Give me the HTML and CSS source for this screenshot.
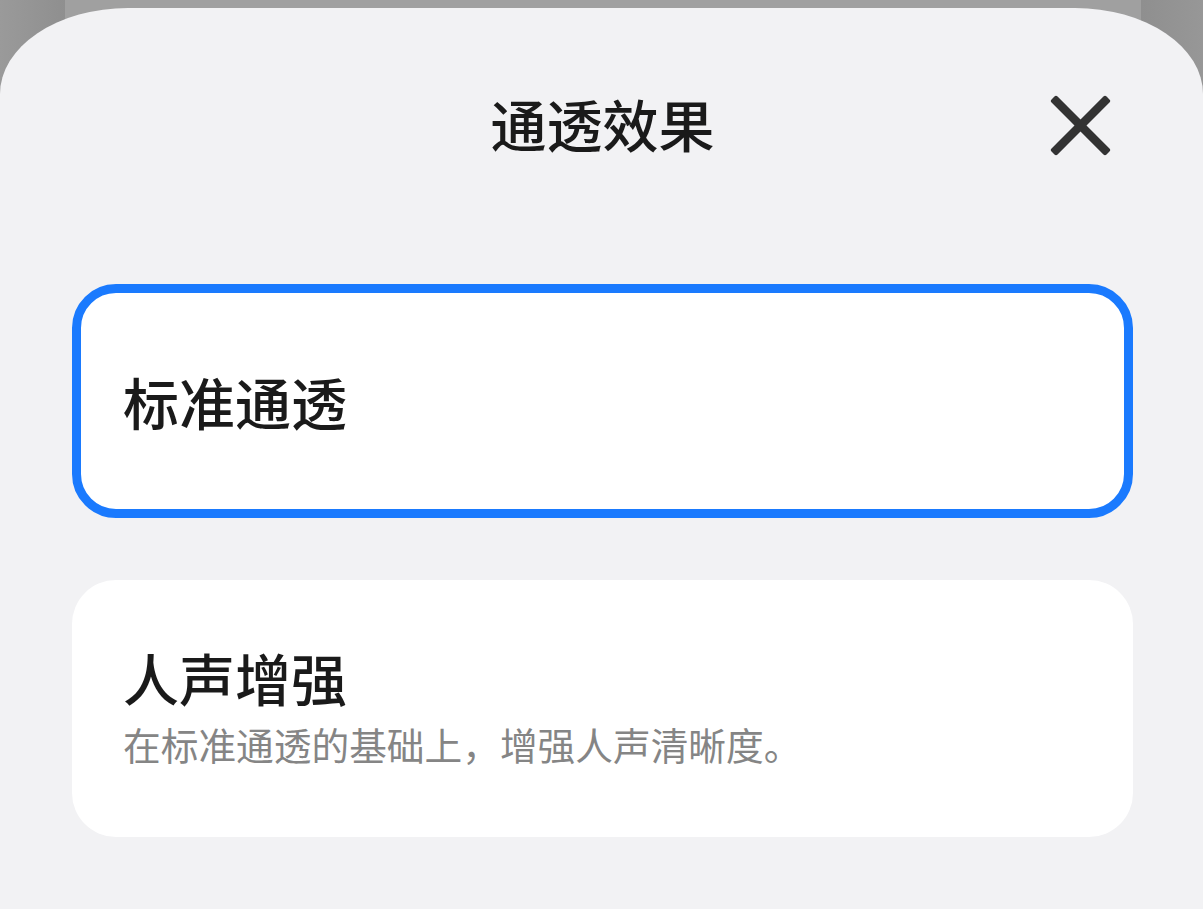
FILE: index.html
```html
<!DOCTYPE html>
<html lang="zh-CN">
<head>
<meta charset="utf-8">
<title>通透效果</title>
<link rel="stylesheet" href="styles.css">
</head>
<body>
<div class="backdrop">
  <div class="back-card"></div>
</div>
<div class="sheet">
  <header class="sheet-header">
    <div class="spacer"></div>
    <h1 class="sheet-title">通透效果</h1>
    <button class="close-btn" aria-label="关闭">
      <svg width="61" height="61" viewBox="0 0 61 61">
        <rect x="-8.4" y="26.25" width="77.8" height="8.5" rx="2.2" fill="#333333" transform="rotate(45 30.5 30.5)"/>
        <rect x="-8.4" y="26.25" width="77.8" height="8.5" rx="2.2" fill="#333333" transform="rotate(-45 30.5 30.5)"/>
      </svg>
    </button>
  </header>
  <div class="options">
    <div class="option option-selected">
      <div class="option-title">标准通透</div>
    </div>
    <div class="option option-desc">
      <div class="option-title">人声增强</div>
      <div class="option-sub">在标准通透的基础上，增强人声清晰度。</div>
    </div>
  </div>
</div>
</body>
</html>
```
FILE: styles.css
```css
html, body {
  margin: 0;
  padding: 0;
}
body {
  width: 1203px;
  height: 909px;
  overflow: hidden;
  background: linear-gradient(90deg, #9a9a9a 0px, #8f8f8f 65px, #8f8f8f 1141px, #979797 1203px);
  font-family: "Noto Sans CJK SC", "Noto Sans", sans-serif;
}
.backdrop {
  height: 100px;
  padding: 0 62px 0 65px;
}
.back-card {
  height: 100px;
  background: #a0a0a0;
}
.sheet {
  margin-top: -92px;
  height: 901px;
  background: #f2f2f4;
  border-radius: 128px 128px 0 0 / 86px 86px 0 0;
  padding: 0 70px 0 72px;
  box-sizing: border-box;
}
.sheet-header {
  height: 234px;
  display: grid;
  grid-template-columns: 1fr auto 1fr;
  align-items: center;
}
.sheet-title {
  margin: 0;
  font-size: 56px;
  line-height: 1;
  font-weight: 500;
  color: #1a1a1a;
  letter-spacing: 0;
  position: relative;
  top: -2px;
}
.close-btn {
  justify-self: end;
  margin-right: 22px;
  width: 61px;
  height: 61px;
  padding: 0;
  border: 0;
  background: transparent;
  display: block;
}
.close-btn svg {
  display: block;
}
.options {
  margin-top: 42px;
  display: flex;
  flex-direction: column;
  gap: 62px;
}
.option {
  background: #ffffff;
  border-radius: 44px;
  box-sizing: border-box;
}
.option-selected {
  height: 234px;
  border: 9px solid #1a7afe;
  padding: 0 42px;
  display: flex;
  align-items: center;
}
.option-desc {
  height: 257px;
  padding: 69px 51px 0;
}
.option-title {
  font-size: 56px;
  line-height: 1;
  font-weight: 500;
  color: #1a1a1a;
}
.option-sub {
  margin-top: 20px;
  font-size: 37.7px;
  line-height: 1;
  font-weight: 400;
  color: #858585;
}
```
